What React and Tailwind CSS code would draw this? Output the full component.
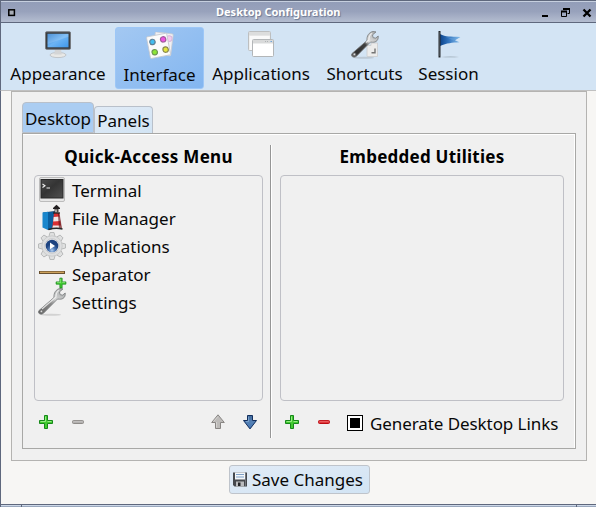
import React from "react";

function Monitor() {
  return (
    <svg width="28" height="28" viewBox="0 0 28 28">
      <defs><linearGradient id="scr" x1="0" y1="0" x2="1" y2="1"><stop offset="0" stopColor="#2f7fd0" /><stop offset=".5" stopColor="#6db4f4" /><stop offset="1" stopColor="#3f97ea" /></linearGradient></defs>
      <ellipse cx="14" cy="24" rx="8" ry="2.600" fill="#e8e8e6" stroke="#b9bcc0" strokeWidth=".8" />
      <path d="M11 18h6l.8 5.500h-7.600z" fill="#d4d5d6" />
      <rect x="1.500" y=".8" width="25" height="17.500" rx="1" fill="#3a3d40" stroke="#777b80" />
      <rect x="3.500" y="2.800" width="21" height="13.500" fill="url(#scr)" />
      <path d="M3.500 2.800h21v3L3.500 13z" fill="#fff" opacity=".15" />
    </svg>
  );
}

function Cards() {
  return (
    <svg width="28" height="28" viewBox="0 0 28 28">
      <g transform="rotate(7 18 12)"><rect x="8" y="1" width="18" height="22" rx="1" fill="#f1f0f3" stroke="#c9ccd2" strokeWidth=".8" /><circle cx="22.500" cy="6" r="2.800" fill="#f2cdee" stroke="#d9b9db" /></g>
      <g transform="rotate(-11 12 15)">
        <rect x="2.500" y="3" width="20.500" height="22" rx="1" fill="#fbfbfb" stroke="#c2c7ce" strokeWidth=".8" />
        <circle cx="7.500" cy="9" r="2.700" fill="#42bdf0" stroke="#5d7f95" strokeWidth="1.200" />
        <circle cx="18.500" cy="8.500" r="2.700" fill="#ee55e2" stroke="#9d5a9a" strokeWidth="1.200" />
        <circle cx="7.800" cy="19.500" r="2.700" fill="#8ce636" stroke="#6d9852" strokeWidth="1.200" />
        <circle cx="19" cy="19" r="2.700" fill="#e2e63d" stroke="#88874e" strokeWidth="1.200" />
      </g>
    </svg>
  );
}

function Windows() {
  return (
    <svg width="28" height="28" viewBox="0 0 28 28">
      <rect x="1.500" y=".5" width="22" height="19" rx="1" fill="#f0f0ef" stroke="#bdbfc0" />
      <path d="M2 1h21v3.500H2z" fill="#dcdddd" />
      <path d="M3 5h19.500v14H3z" fill="#fafafa" />
      <rect x="5.500" y="8.500" width="21" height="17" rx="1" fill="#fff" stroke="#b3b6b8" />
      <path d="M6 9h20v3.500H6z" fill="#d9dada" />
      <path d="M18 10.500h4" stroke="#b0b4b6" strokeDasharray="1 1" /><path d="M23.500 10.500h1.500" stroke="#6da4dc" />
    </svg>
  );
}

function Wrench({ tile = false }) {
  return (
    <svg width="28" height="28" viewBox="0 0 28 28">
      <defs>
        <linearGradient id="steel" gradientUnits="userSpaceOnUse" x1="1" y1="27" x2="26" y2="1"><stop offset="0" stopColor="#666" /><stop offset=".45" stopColor="#888" /><stop offset=".63" stopColor="#d2d3d3" /><stop offset="1" stopColor="#a4a7a8" /></linearGradient>
        <linearGradient id="darksteel" gradientUnits="userSpaceOnUse" x1="1" y1="27" x2="26" y2="1"><stop offset="0" stopColor="#777" /><stop offset=".2" stopColor="#303030" /><stop offset=".52" stopColor="#404040" /><stop offset=".65" stopColor="#ddd" /><stop offset="1" stopColor="#a4a7a8" /></linearGradient>
      </defs>
      <ellipse cx="13" cy="26.800" rx="10" ry="1" fill="#777" opacity=".25" />
      {tile && <g><path d="M16 14.500h4v-2.500h6.500v13.500H16z" fill="#ececeb" stroke="#cbcccd" strokeWidth=".8" /><path d="M24 17.500v4.300h-3.500" fill="none" stroke="#747474" strokeWidth="1.400" /></g>}
      <path d="M1 22.500 16 9.500C15.500 5 18 1.200 22 .5l3 .4-3.500 3 .6 2.800 2.600.4L27.200 5c.5 4-2 6.500-5.700 6.200l-2-.2L5.200 25.500C2.500 27.500-1 25 1 22.500z" fill={tile ? "url(#darksteel)" : "url(#steel)"} stroke="#777a7b" strokeWidth=".8" />
      <path d={tile ? "M15 11.500 18 9c0-3 1-5.500 3-6.700" : "M4 21 18 9c0-3 1-5.500 3-6.700"} fill="none" stroke="#f5f5f5" strokeWidth="1.200" opacity=".8" />
      <circle cx="3.400" cy="23.400" r="1.300" fill="#ddd" stroke="#555" strokeWidth=".7" />
    </svg>
  );
}

function Flag() {
  return (
    <svg width="28" height="28" viewBox="0 0 28 28">
      <defs><linearGradient id="flag"><stop stopColor="#0c438a" /><stop offset=".4" stopColor="#2f72bd" /><stop offset="1" stopColor="#8bc1ed" /></linearGradient></defs>
      <path d="M6 26q10-1.500 18 0-9 1.200-18 0" fill="#a7b5c2" opacity=".8" />
      <path d="M5 3c6 3 10 2.500 20.500 3L20 9.200l4.500 2C17 11.500 12 12 5 15z" fill="url(#flag)" />
      <path d="M10 5.500q8 3 15 .5l-6.500 3.500z" fill="#69a4dc" opacity=".45" />
      <path d="M4.500-.5v27" stroke="#24282c" strokeWidth="2" />
      <path d="M4.300 1v24" stroke="#747b80" strokeWidth=".5" />
    </svg>
  );
}

function Terminal() {
  return (
    <svg width="28" height="28" viewBox="0 0 28 28">
      <defs><linearGradient id="term" x2="1" y2="1"><stop stopColor="#4b4b4b" /><stop offset=".45" stopColor="#343434" /><stop offset="1" stopColor="#505050" /></linearGradient></defs>
      <rect x="1.500" y="1.500" width="25" height="24" rx="1.500" fill="#e6e6e6" stroke="#bcbcbc" />
      <rect x="3" y="3.500" width="22" height="18.500" fill="url(#term)" stroke="#292929" />
      <path d="m4.500 8 2.500 1.700L4.500 11.500M8.500 12H12" fill="none" stroke="#eee" strokeWidth="1.100" />
    </svg>
  );
}

function Lighthouse() {
  return (
    <svg width="28" height="28" viewBox="0 0 28 28">
      <path d="m5 8.500 12-1.500v17.500L10 26z" fill="#17436c" /><path d="m4.500 8.500 5.500-.8v18.300l-5.500-2.500z" fill="#1986cc" /><path d="M10 8h6.500v15.500L10 25.500z" fill="#0b5f9f" />
      <path d="M16 9h5l2.500 15.500h-9.300z" fill="#d92f32" />
      <path d="m15.700 13 6-.5.600 4.500-7.100.5zM15 21.500h8l.4 2.500h-9z" fill="#f2e7e5" />
      <path d="M19.800 9H21.500l2.500 15.500h-3z" fill="#641319" opacity=".65" />
      <path d="M15 4 18.500.8 22 4v1h-7z" fill="#221f20" /><path d="M16.500 5h4v3.500h-4z" fill="#4c4744" /><path d="M15 9h7" stroke="#222" strokeWidth="1.300" />
      <path d="M17.500 5.500h1v2.500h-1z" fill="#fff" /><path d="M10.500 25.500q7-2 14-.5" stroke="#252a2b" strokeWidth="1.500" fill="none" />
    </svg>
  );
}

function Gear() {
  return (
    <svg width="28" height="28" viewBox="0 0 28 28">
      <defs><radialGradient id="ball" cy=".85"><stop stopColor="#b0cdf0" /><stop offset=".5" stopColor="#4d78b4" /><stop offset="1" stopColor="#1d4380" /></radialGradient></defs>
      {[0, 45, 90, 135, 180, 225, 270, 315].map((a) => <path key={a} transform={`rotate(${a} 14 14)`} d="m10.800 5 1.200-4.500h4l1.200 4.500z" fill="#dfe0e0" stroke="#b3b5b6" strokeWidth=".9" />)}
      <circle cx="14" cy="14" r="10.200" fill="#dedfe0" stroke="#bdbfc0" strokeWidth=".6" />
      <circle cx="14" cy="14" r="7.200" fill="#f0f0f0" stroke="#b7b9bc" strokeWidth=".7" />
      <circle cx="14" cy="14" r="6.300" fill="url(#ball)" />
      <path d="m12 10.500 5 3.400-5 3.400z" fill="#fff" />
    </svg>
  );
}

function Plus({ className = "" }) {
  return <svg className={className} width="16" height="16" viewBox="0 0 16 16"><path d="M6.500 1.500h3v5h5v3h-5v5h-3v-5h-5v-3h5z" fill="#42cb30" stroke="#16881a" strokeLinejoin="round" /><path d="M7.500 2.500v5h-5m7 0h4" fill="none" stroke="#a1f18d" strokeWidth=".9" /></svg>;
}

function Separator() {
  return (
    <div className="relative h-7 w-7">
      <svg width="28" height="28" viewBox="0 0 28 28"><path d="M1 12.500h26" stroke="#69512f" strokeWidth="3" /><path d="M2 12.300h24" stroke="#d3a760" strokeWidth="1.300" /></svg>
      <Plus className="absolute left-[16.500px] top-[17px] h-3 w-3" />
    </div>
  );
}

function Minus({ red }) {
  return <svg width="16" height="16" viewBox="0 0 16 16"><rect x="2.500" y="6.500" width="11" height="3" rx="1" fill={red ? "#e0383c" : "#b3b1b0"} stroke={red ? "#bc0c14" : "#8e8b89"} /><path d="M3.500 7.300h9" stroke={red ? "#f07a7a" : "#cbc9c7"} strokeWidth=".7" /></svg>;
}

function Arrow({ down }) {
  return (
    <svg width="16" height="16" viewBox="0 0 16 16">
      <defs><linearGradient id="down" x2="0" y2="1"><stop stopColor="#416a9b" /><stop offset=".5" stopColor="#5581b5" /><stop offset="1" stopColor="#4276b7" /></linearGradient></defs>
      <path d={down ? "M5.500 1.500h5v5h4L8 14.900l-6.500-8.400h4z" : "M8 .8l6.300 7.700h-3.800v6h-5v-6H1.700z"} fill={down ? "url(#down)" : "#bdbbb9"} stroke={down ? "#122e5d" : "#888583"} strokeLinejoin="round" />
      <path d={down ? "M6.500 2.500v5H4" : "m3.500 7.500 4.500-5M6.500 8v5.500"} fill="none" stroke={down ? "#8bb2da" : "#deddda"} strokeWidth=".7" />
    </svg>
  );
}

function Floppy() {
  return <svg width="14" height="15" viewBox="0 0 14 15"><path d="M0 .5h14v14H1.500L0 13z" fill="#45484d" /><path d="M2 .5h10v7H2z" fill="#f4f7fa" /><path d="M3 2.500h8M3 5h8" stroke="#7d9fc6" /><path d="M3 9.500h8v5H3z" fill="#babcbf" /><path d="M5 10.500h2.500v3.500H5z" fill="#242629" /><path d="M12.500 1v13" stroke="#73767c" /></svg>;
}

function Tool({ icon, label, width, selected }) {
  return (
    <div className={`${width} flex h-[62px] shrink-0 flex-col items-center rounded-[3px] border ${selected ? "border-[#9dc7f7] bg-linear-to-br from-[#a3c8f2] to-[#83b6f0] pt-[4px]" : "border-transparent pt-[3px]"}`}>
      {icon}<span className="mt-[3px] h-6 leading-6">{label}</span>
    </div>
  );
}

const entries = [
  ["Terminal", <Terminal />],
  ["File Manager", <Lighthouse />],
  ["Applications", <Gear />],
  ["Separator", <Separator />],
  ["Settings", <Wrench />],
];

export default function App() {
  return (
    <div className="flex h-[507px] w-[596px] flex-col overflow-hidden bg-[#f7f6f4] font-['Noto_Sans',sans-serif] text-[17px] whitespace-nowrap text-[#080808]">
      <header className="flex h-[23px] shrink-0 items-center border-t border-b border-l border-[#5f687d] bg-linear-to-b from-[#929db8] via-[#98a2bc] to-[#b4bdd0] pt-[2px] shadow-[inset_0_1px_#c6cfdf]">
        <svg className="ml-[7px]" width="8" height="8"><rect x=".8" y=".8" width="5.600" height="5.600" fill="#a8adb6" stroke="#000" strokeWidth="1.500" /></svg>
        <div className="ml-[200px] w-[125px] pb-px text-[11px] leading-[18px] font-bold text-white [text-shadow:1px_1px_1px_#6c7891]">Desktop Configuration</div>
        <svg className="ml-auto" width="55" height="12" viewBox="541 7 55 12"><path d="M542 16h6" stroke="#000" strokeWidth="2" /><path d="M561.500 11.500h5v5h-5zm2.500-3h5.500v5h-2" fill="none" stroke="#000" /><path d="M561 11.500h6M563 9h7" stroke="#000" strokeWidth="2" /><path d="m583.500 9.500 7 7m0-7-7 7" stroke="#000" strokeWidth="2.300" /></svg>
      </header>
      <nav className="flex h-[67px] shrink-0 border-l border-l-[#5f687d] bg-[#d3e4f4] pt-1">
        <Tool icon={<Monitor />} label="Appearance" width="w-[114px]" />
        <Tool icon={<Cards />} label="Interface" width="w-[89px]" selected />
        <Tool icon={<Windows />} label="Applications" width="w-[114px]" />
        <Tool icon={<Wrench tile />} label="Shortcuts" width="w-[93px]" />
        <Tool icon={<Flag />} label="Session" width="w-[75px]" />
      </nav>
      <main className="flex min-h-0 flex-1 flex-col items-center border-t border-l border-t-[#c0c0c0] border-l-[#5f687d] bg-[#f7f6f4]">
        <section className="mr-[-1px] flex h-[370px] w-[576px] shrink-0 flex-col border border-[#b4b3b1] bg-[#f0f0f0] px-[10px] pt-[10px]">
          <div className="flex h-[31px] shrink-0 items-end">
            <div className="h-[31px] w-[72px] rounded-t-[4px] border border-[#b9c0ca] bg-[#abcdf2] text-center leading-[32px]">Desktop</div>
            <div className="h-[27px] w-[59px] rounded-t-[4px] border border-b-0 border-[#b9c0ca] bg-linear-to-br from-[#e1ebf6] to-[#d2e4f4] text-center leading-[28px]">Panels</div>
          </div>
          <div className="flex h-[316px] shrink-0 border border-[#a8a8a6] px-[11px] pt-[11px] shadow-[inset_-1px_1px_#fff]">
            <div className="flex w-[236px] shrink-0 flex-col">
              <h2 className="h-[30px] w-[229px] text-center leading-[23px] font-bold tracking-[0.3px] text-black">Quick-Access Menu</h2>
              <div className="h-[226px] w-[229px] shrink-0 rounded-[4px] border border-[#bfc0c6] pl-[3px]">
                {entries.map(([name, icon]) => (
                  <div key={name} className="flex h-7 items-center gap-[6px]"><div className="h-7 w-7">{icon}</div><span className="pt-[2px] leading-6">{name}</span></div>
                ))}
              </div>
              <div className="flex pt-[13px] pl-[4px]">
                <Plus /><div className="ml-4"><Minus /></div><div className="ml-[124px]"><Arrow /></div><div className="ml-4"><Arrow down /></div>
              </div>
            </div>
            <div className="mr-[8px] h-[293px] w-[2px] shrink-0 border-l border-[#969696] bg-white" />
            <div className="flex w-[284px] shrink-0 flex-col">
              <h2 className="h-[30px] text-center leading-[23px] font-bold tracking-[0.25px] text-black">Embedded Utilities</h2>
              <div className="h-[226px] shrink-0 rounded-[4px] border border-[#bfc0c6]" />
              <div className="flex pt-[13px] pl-[4px]">
                <Plus /><div className="ml-4"><Minus red /></div>
                <div className="mt-[1px] ml-[15px] flex h-4 w-4 items-center justify-center border border-black bg-white"><div className="h-[10px] w-[10px] bg-black" /></div>
                <span className="ml-[7px] h-6 leading-[20px] tracking-[-0.08px]">Generate Desktop Links</span>
              </div>
            </div>
          </div>
        </section>
        <button className="mt-1 ml-[2px] flex h-[29px] w-[141px] items-center gap-[5px] rounded-[3px] border border-[#bfc4cb] bg-linear-to-br from-[#e1ebf6] to-[#d2e4f4] pl-[3px] leading-[26px]"><Floppy /><span className="pt-px">Save Changes</span></button>
      </main>
      <footer className="flex h-[3px] shrink-0 border-t border-l border-[#5f687d] bg-[#9aa8be] shadow-[inset_0_1px_#cdd8e8]">
        <div className="ml-5 h-[2px] w-[556px] border-x border-[#5f687d]" />
      </footer>
    </div>
  );
}
